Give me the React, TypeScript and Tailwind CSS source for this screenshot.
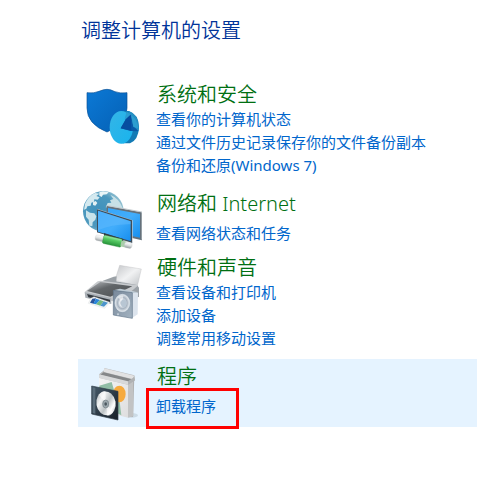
import type { ReactNode } from 'react'

type Category = {
  title: string
  icon: ReactNode
  links: string[]
  spacing: string
  listSpacing?: string
  marked?: string
}

function SecurityIcon() {
  return (
    <svg viewBox="36 6 180 186" className="w-[60px] h-[62px]" aria-hidden="true">
      <defs>
        <linearGradient id="shield" x1="0" y1="0" x2="1" y2="1">
          <stop offset="0" stopColor="#0b79d6" />
          <stop offset="1" stopColor="#0560b4" />
        </linearGradient>
        <linearGradient id="pie" x1="0" y1="0" x2="1" y2="1">
          <stop offset="0" stopColor="#35b5e6" />
          <stop offset="1" stopColor="#18b4ee" />
        </linearGradient>
      </defs>
      <path d="M51 38 Q72 41 87 34 Q101 28 111 28 Q121 28 135 35 Q150 41 171 38 V84 Q171 132 111 156 Q51 132 51 84 Z" fill="url(#shield)" stroke="#095096" strokeWidth="2" />
      <path d="M158 93 H176 Q207 103 207 142 Q205 181 180 190 H158 Z" fill="#137bb5" />
      <ellipse cx="154" cy="142" rx="35" ry="49" fill="url(#pie)" />
      <path d="M176 93 Q205 103 207 142 L206 153 L186 151 L170 126 Z" fill="#2590c4" />
      <path d="M170 94 L182 104 L172 124 L164 117 Z" fill="#2a9dd2" />
      <path d="M182 104 L167 118 L152 145 L182 153 L206 154 L190 138 Z" fill="#0a5aa8" />
      <path d="M182 104 L184 152 L152 145 L168 118 Z" fill="#064ca0" />
      <path d="M184 106 Q201 116 205 145 L190 141 Z" fill="#2e9ed0" />
    </svg>
  )
}

function NetworkIcon() {
  return (
    <svg viewBox="36 33 180 177" className="w-[60px] h-[59px]" aria-hidden="true">
      <defs>
        <radialGradient id="globe" cx="0.4" cy="0.5" r="0.65">
          <stop offset="0" stopColor="#3e91bd" />
          <stop offset="0.6" stopColor="#4c98bd" />
          <stop offset="1" stopColor="#a8cdd8" />
        </radialGradient>
        <linearGradient id="screen" x1="0" y1="0" x2="1" y2="1">
          <stop offset="0" stopColor="#36a6fb" />
          <stop offset="0.5" stopColor="#42adfb" />
          <stop offset="1" stopColor="#168eee" />
        </linearGradient>
        <linearGradient id="cable" x1="0" y1="0" x2="0" y2="1">
          <stop offset="0" stopColor="#a1edaa" />
          <stop offset="0.35" stopColor="#57cb64" />
          <stop offset="1" stopColor="#27933a" />
        </linearGradient>
        <linearGradient id="plug" x1="0" y1="0" x2="0" y2="1">
          <stop offset="0" stopColor="#ffffff" />
          <stop offset="0.5" stopColor="#dce0e0" />
          <stop offset="1" stopColor="#979da0" />
        </linearGradient>
      </defs>
      <circle cx="100" cy="94" r="61" fill="url(#globe)" />
      <path d="M45 72 Q54 48 76 39 L88 41 L79 48 L89 52 L83 59 L73 58 L72 65 L64 68 L62 77 L52 79 L49 86 L42 89 Z" fill="#d4e9ef" />
      <path d="M88 37 L99 34 L116 37 L110 43 L99 44 L95 51 L88 47 Z" fill="#eaf5f7" />
      <path d="M121 44 Q147 55 157 82 L158 92 L107 82 L113 69 L124 68 L120 61 L130 57 Z" fill="#c7e0e6" />
      <path d="M48 91 L60 98 L73 100 L79 109 L76 119 L68 127 L67 138 L58 137 L56 119 L48 110 Z" fill="#c9e3ea" />
      <path d="M69 67 L77 63 L82 69 L76 77 L69 75 Z" fill="#e4f1f4" />
      <path d="M110 77 L216 97 V181 L110 157 Z" fill="#65717b" />
      <path d="M110 77 L113 77 L216 96 V179" fill="none" stroke="#c3cace" strokeWidth="3" />
      <path d="M114 84 L210 102 V173 L114 152 Z" fill="url(#screen)" />
      <path d="M81 86 L188 121 V190 L81 157 Z" fill="#c0c8ce" />
      <path d="M81 88 L186 121 V188 L81 157 Z" fill="#3e4d59" />
      <path d="M84 92 L182 124 V183 L84 155 Z" fill="url(#screen)" />
      <path d="M84 92 L182 124 V133 Q125 132 84 151 Z" fill="#66bdfd" opacity="0.45" />
      <path d="M102 159 L160 177 V186 L102 168 Z" fill="#343c43" />
      <g transform="rotate(13 131 182)">
        <rect x="75" y="176" width="27" height="17" rx="6" fill="url(#plug)" stroke="#c9cccf" />
        <rect x="99" y="172" width="57" height="25" rx="4" fill="url(#cable)" stroke="#258a35" />
        <rect x="154" y="176" width="18" height="18" rx="3" fill="#a9cda9" />
        <rect x="165" y="177" width="23" height="17" rx="7" fill="url(#plug)" stroke="#b9bec0" />
      </g>
    </svg>
  )
}

function HardwareIcon() {
  return (
    <svg viewBox="36 0 180 195" className="w-[60px] h-[65px]" aria-hidden="true">
      <defs>
        <linearGradient id="paper" x1="0" y1="0" x2="1" y2="1">
          <stop offset="0" stopColor="#c4c6c9" />
          <stop offset="0.5" stopColor="#f1f2f3" />
          <stop offset="1" stopColor="#bfc2c5" />
        </linearGradient>
        <linearGradient id="lid" x1="0" y1="0" x2="1" y2="1">
          <stop offset="0" stopColor="#b9bcc0" />
          <stop offset="0.4" stopColor="#626669" />
          <stop offset="1" stopColor="#4d5052" />
        </linearGradient>
        <linearGradient id="speaker" x1="0" y1="0" x2="1" y2="1">
          <stop offset="0" stopColor="#78889a" />
          <stop offset="1" stopColor="#a3b3c1" />
        </linearGradient>
        <radialGradient id="cone">
          <stop offset="0" stopColor="#728295" />
          <stop offset="0.35" stopColor="#edf1f5" />
          <stop offset="0.65" stopColor="#a7b3c0" />
          <stop offset="1" stopColor="#e6ebef" />
        </radialGradient>
      </defs>
      <path d="M149 31 L214 42 L202 94 L135 75 Z" fill="url(#paper)" stroke="#b5b7b9" />
      <path d="M131 65 L140 64 L139 79 L201 90 L207 98 V126 L150 132 L83 83 Z" fill="#9ca2a7" />
      <path d="M83 79 L92 77 L205 91 L185 108 L128 139 L44 111 Z" fill="#c8cbce" />
      <path d="M91 81 L187 94 L121 125 L51 108 Z" fill="url(#lid)" />
      <path d="M44 111 L124 129 V147 L46 128 Z" fill="#aab0b6" />
      <path d="M51 117 L120 134 V144 L55 127 Z" fill="#343a40" />
      <path d="M62 130 L72 125 L120 142 L104 160 L55 145 Z" fill="#f4f6f7" stroke="#d0d3d6" />
      <path d="M67 131 L78 130 L71 146 L60 143 Z" fill="#28549c" />
      <path d="M78 131 L90 135 L78 148 L70 146 Z" fill="#2986db" />
      <path d="M90 135 L101 139 L91 152 L78 148 Z" fill="#75b883" />
      <path d="M101 139 L114 143 L102 155 L91 152 Z" fill="#4d95cb" />
      <path d="M185 109 L204 113 L203 178 L185 190 Z" fill="#dce4ed" />
      <path d="M130 106 L150 101 L204 112 L187 115 Z" fill="#becbd5" />
      <path d="M130 106 L187 113 V190 L130 180 Z" fill="url(#speaker)" stroke="#61758a" strokeWidth="2" />
      <ellipse cx="157" cy="144" rx="22" ry="26" fill="url(#cone)" stroke="#dbe4eb" strokeWidth="2" />
      <path d="M158 144 L144 127 Q151 120 160 122 Z" fill="#ffffff" opacity="0.55" />
      <ellipse cx="161" cy="145" rx="8" ry="12" fill="#b8c6d3" />
      <circle cx="144" cy="178" r="3" fill="#c9d4dd" />
    </svg>
  )
}

function ProgramsIcon() {
  return (
    <svg viewBox="36 27 180 177" className="w-[60px] h-[59px]" aria-hidden="true">
      <defs>
        <linearGradient id="box" x1="0" y1="0" x2="1" y2="1">
          <stop offset="0" stopColor="#f5f5f5" />
          <stop offset="1" stopColor="#dededf" />
        </linearGradient>
        <linearGradient id="disc" x1="0" y1="0" x2="1" y2="1">
          <stop offset="0" stopColor="#9da4a7" />
          <stop offset="0.3" stopColor="#f2f4f4" />
          <stop offset="0.55" stopColor="#bdc3c5" />
          <stop offset="0.75" stopColor="#ffffff" />
          <stop offset="1" stopColor="#9ba3a7" />
        </linearGradient>
        <linearGradient id="case" x1="0" y1="0" x2="1" y2="1">
          <stop offset="0" stopColor="#465a69" />
          <stop offset="1" stopColor="#171f28" />
        </linearGradient>
      </defs>
      <ellipse cx="185" cy="181" rx="19" ry="7" fill="#bbcbd6" opacity="0.6" />
      <path d="M87 59 L104 44 L193 64 L189 186 L87 165 Z" fill="#a8aaab" />
      <path d="M87 64 L174 85 V188 L87 166 Z" fill="url(#box)" />
      <path d="M174 84 L190 76 V184 L174 188 Z" fill="#c2c3c4" />
      <path d="M88 92 L125 81 L131 102 L148 132 L154 181 L139 173 L88 108 Z" fill="#91bda5" />
      <ellipse cx="148" cy="117" rx="19" ry="25" fill="#f6aa3e" />
      <path d="M87 58 L103 47 L103 39 L193 61 L195 76 L174 89 L87 68 Z" fill="#b7b8b9" />
      <path d="M103 40 L193 62 L187 72 L101 51 Z" fill="#e2e2e3" />
      <path d="M91 59 L101 52 L185 73 L174 82 Z" fill="#858789" />
      <path d="M87 58 L174 79 L174 89 L87 69 Z" fill="#d8d9da" />
      <path d="M174 79 L192 67 L195 76 L175 89 Z" fill="#b0b2b4" />
      <path d="M65 93 L144 109 V195 L65 177 Z" fill="url(#case)" stroke="#303e49" strokeWidth="2" />
      <path d="M68 97 L76 99 V176 L68 174 Z" fill="#5b6d7a" />
      <ellipse cx="108" cy="145" rx="29" ry="36" transform="rotate(-10 108 145)" fill="url(#disc)" />
      <path d="M108 145 L87 120 Q94 108 106 108 Z M109 149 L130 170 Q123 183 112 182 Z" fill="#ffffff" opacity="0.6" />
      <ellipse cx="107" cy="147" rx="9" ry="12" fill="#9da9ae" stroke="#6f7b82" strokeWidth="2" />
      <ellipse cx="107" cy="147" rx="4" ry="5" fill="#4c5860" />
    </svg>
  )
}

const categories: Category[] = [
  {
    title: '系统和安全',
    icon: <SecurityIcon />,
    links: ['查看你的计算机状态', '通过文件历史记录保存你的文件备份副本', '备份和还原(Windows 7)'],
    spacing: 'pb-[9px]',
  },
  {
    title: '网络和 Internet',
    icon: <NetworkIcon />,
    links: ['查看网络状态和任务'],
    spacing: 'pb-0',
    listSpacing: 'mt-[5px]',
  },
  {
    title: '硬件和声音',
    icon: <HardwareIcon />,
    links: ['查看设备和打印机', '添加设备', '调整常用移动设置'],
    spacing: 'pb-[9px]',
  },
  {
    title: '程序',
    icon: <ProgramsIcon />,
    links: ['卸载程序'],
    spacing: 'pb-1 bg-[#e5f3ff]',
    listSpacing: 'mt-[5px]',
    marked: '卸载程序',
  },
]

export default function App() {
  return (
    <main className="min-h-screen bg-white pl-[78px] pt-4 font-['Noto_Sans','Noto_Sans_CJK_SC',sans-serif]">
      <h1 className="pl-[3px] text-[20px] leading-[30px] font-[350] text-[#003399]">调整计算机的设置</h1>

      <div className="mt-[31px]">
        {categories.map(({ title, icon, links, spacing, listSpacing, marked }) => (
          <section key={title} className={`flex items-start gap-[14px] pl-1 pt-[5px] ${spacing}`}>
            <div className="shrink-0">{icon}</div>
            <div className="min-w-0">
              <h2 className="pl-px text-[20px] leading-[26px] font-[350]">
                <a href="#" className="text-[#006f12] hover:underline">{title}</a>
              </h2>
              <ul className={listSpacing}>
                {links.map((label) => (
                  <li key={label} className="relative text-[15px] leading-[23px]">
                    <a href="#" className="text-[#0066cc] hover:underline">{label}</a>
                    {label === marked && (
                      <span className="pointer-events-none absolute -left-[10px] -top-[7px] h-[41px] w-[93px] border-3 border-[#ff0000]" />
                    )}
                  </li>
                ))}
              </ul>
            </div>
          </section>
        ))}
      </div>
    </main>
  )
}
